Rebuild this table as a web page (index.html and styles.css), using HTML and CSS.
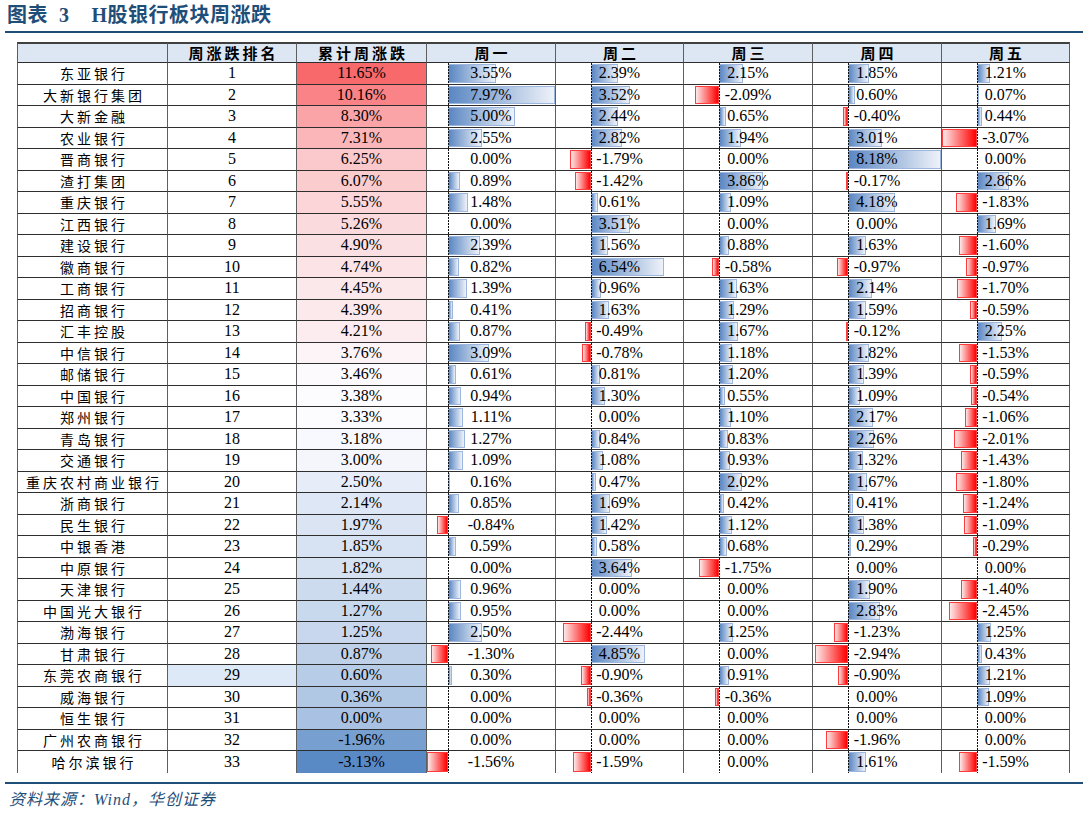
FILE: index.html
```html
<!DOCTYPE html>
<html lang="zh-CN">
<head>
<meta charset="utf-8">
<title>H股银行板块周涨跌</title>
<link rel="stylesheet" href="styles.css">
</head>
<body>
<div class="page">
  <h1 class="title"><span>图表</span><span class="no">3</span><span class="name">H股银行板块周涨跌</span></h1>
  <table class="tbl">
    <thead>
      <tr><th></th><th>周涨跌排名</th><th>累计周涨跌</th><th>周一</th><th>周二</th><th>周三</th><th>周四</th><th>周五</th></tr>
    </thead>
    <tbody>
      <tr><td class="nm">东亚银行</td><td>1</td><td style="background:#f8696b">11.65%</td><td class="w w1"><i class="p" style="--v:3.55"></i><span>3.55%</span></td><td class="w"><i class="p" style="--v:2.39"></i><span>2.39%</span></td><td class="w"><i class="p" style="--v:2.15"></i><span>2.15%</span></td><td class="w"><i class="p" style="--v:1.85"></i><span>1.85%</span></td><td class="w"><i class="p" style="--v:1.21"></i><span>1.21%</span></td></tr>
      <tr><td class="nm">大新银行集团</td><td>2</td><td style="background:#f98386">10.16%</td><td class="w w1"><i class="p" style="--v:7.97"></i><span>7.97%</span></td><td class="w"><i class="p" style="--v:3.52"></i><span>3.52%</span></td><td class="w"><i class="n" style="--v:2.09"></i><span>-2.09%</span></td><td class="w"><i class="p" style="--v:0.60"></i><span>0.60%</span></td><td class="w"><i class="p" style="--v:0.07"></i><span>0.07%</span></td></tr>
      <tr><td class="nm">大新金融</td><td>3</td><td style="background:#faa4a7">8.30%</td><td class="w w1"><i class="p" style="--v:5.00"></i><span>5.00%</span></td><td class="w"><i class="p" style="--v:2.44"></i><span>2.44%</span></td><td class="w"><i class="p" style="--v:0.65"></i><span>0.65%</span></td><td class="w"><i class="n" style="--v:0.40"></i><span>-0.40%</span></td><td class="w"><i class="p" style="--v:0.44"></i><span>0.44%</span></td></tr>
      <tr><td class="nm">农业银行</td><td>4</td><td style="background:#fab6b8">7.31%</td><td class="w w1"><i class="p" style="--v:2.55"></i><span>2.55%</span></td><td class="w"><i class="p" style="--v:2.82"></i><span>2.82%</span></td><td class="w"><i class="p" style="--v:1.94"></i><span>1.94%</span></td><td class="w"><i class="p" style="--v:3.01"></i><span>3.01%</span></td><td class="w"><i class="n" style="--v:3.07"></i><span>-3.07%</span></td></tr>
      <tr><td class="nm">晋商银行</td><td>5</td><td style="background:#fbc8cb">6.25%</td><td class="w w1"><span>0.00%</span></td><td class="w"><i class="n" style="--v:1.79"></i><span>-1.79%</span></td><td class="w"><span>0.00%</span></td><td class="w"><i class="p" style="--v:8.18"></i><span>8.18%</span></td><td class="w"><span>0.00%</span></td></tr>
      <tr><td class="nm">渣打集团</td><td>6</td><td style="background:#fbccce">6.07%</td><td class="w w1"><i class="p" style="--v:0.89"></i><span>0.89%</span></td><td class="w"><i class="n" style="--v:1.42"></i><span>-1.42%</span></td><td class="w"><i class="p" style="--v:3.86"></i><span>3.86%</span></td><td class="w"><i class="n" style="--v:0.17"></i><span>-0.17%</span></td><td class="w"><i class="p" style="--v:2.86"></i><span>2.86%</span></td></tr>
      <tr><td class="nm">重庆银行</td><td>7</td><td style="background:#fbd5d7">5.55%</td><td class="w w1"><i class="p" style="--v:1.48"></i><span>1.48%</span></td><td class="w"><i class="p" style="--v:0.61"></i><span>0.61%</span></td><td class="w"><i class="p" style="--v:1.09"></i><span>1.09%</span></td><td class="w"><i class="p" style="--v:4.18"></i><span>4.18%</span></td><td class="w"><i class="n" style="--v:1.83"></i><span>-1.83%</span></td></tr>
      <tr><td class="nm">江西银行</td><td>8</td><td style="background:#fbdadd">5.26%</td><td class="w w1"><span>0.00%</span></td><td class="w"><i class="p" style="--v:3.51"></i><span>3.51%</span></td><td class="w"><span>0.00%</span></td><td class="w"><span>0.00%</span></td><td class="w"><i class="p" style="--v:1.69"></i><span>1.69%</span></td></tr>
      <tr><td class="nm">建设银行</td><td>9</td><td style="background:#fbe0e3">4.90%</td><td class="w w1"><i class="p" style="--v:2.39"></i><span>2.39%</span></td><td class="w"><i class="p" style="--v:1.56"></i><span>1.56%</span></td><td class="w"><i class="p" style="--v:0.88"></i><span>0.88%</span></td><td class="w"><i class="p" style="--v:1.63"></i><span>1.63%</span></td><td class="w"><i class="n" style="--v:1.60"></i><span>-1.60%</span></td></tr>
      <tr><td class="nm">徽商银行</td><td>10</td><td style="background:#fbe3e6">4.74%</td><td class="w w1"><i class="p" style="--v:0.82"></i><span>0.82%</span></td><td class="w"><i class="p" style="--v:6.54"></i><span>6.54%</span></td><td class="w"><i class="n" style="--v:0.58"></i><span>-0.58%</span></td><td class="w"><i class="n" style="--v:0.97"></i><span>-0.97%</span></td><td class="w"><i class="n" style="--v:0.97"></i><span>-0.97%</span></td></tr>
      <tr><td class="nm">工商银行</td><td>11</td><td style="background:#fbe8eb">4.45%</td><td class="w w1"><i class="p" style="--v:1.39"></i><span>1.39%</span></td><td class="w"><i class="p" style="--v:0.96"></i><span>0.96%</span></td><td class="w"><i class="p" style="--v:1.63"></i><span>1.63%</span></td><td class="w"><i class="p" style="--v:2.14"></i><span>2.14%</span></td><td class="w"><i class="n" style="--v:1.70"></i><span>-1.70%</span></td></tr>
      <tr><td class="nm">招商银行</td><td>12</td><td style="background:#fbe9ec">4.39%</td><td class="w w1"><i class="p" style="--v:0.41"></i><span>0.41%</span></td><td class="w"><i class="p" style="--v:1.63"></i><span>1.63%</span></td><td class="w"><i class="p" style="--v:1.29"></i><span>1.29%</span></td><td class="w"><i class="p" style="--v:1.59"></i><span>1.59%</span></td><td class="w"><i class="n" style="--v:0.59"></i><span>-0.59%</span></td></tr>
      <tr><td class="nm">汇丰控股</td><td>13</td><td style="background:#fcecef">4.21%</td><td class="w w1"><i class="p" style="--v:0.87"></i><span>0.87%</span></td><td class="w"><i class="n" style="--v:0.49"></i><span>-0.49%</span></td><td class="w"><i class="p" style="--v:1.67"></i><span>1.67%</span></td><td class="w"><i class="n" style="--v:0.12"></i><span>-0.12%</span></td><td class="w"><i class="p" style="--v:2.25"></i><span>2.25%</span></td></tr>
      <tr><td class="nm">中信银行</td><td>14</td><td style="background:#fcf4f7">3.76%</td><td class="w w1"><i class="p" style="--v:3.09"></i><span>3.09%</span></td><td class="w"><i class="n" style="--v:0.78"></i><span>-0.78%</span></td><td class="w"><i class="p" style="--v:1.18"></i><span>1.18%</span></td><td class="w"><i class="p" style="--v:1.82"></i><span>1.82%</span></td><td class="w"><i class="n" style="--v:1.53"></i><span>-1.53%</span></td></tr>
      <tr><td class="nm">邮储银行</td><td>15</td><td style="background:#fcfafd">3.46%</td><td class="w w1"><i class="p" style="--v:0.61"></i><span>0.61%</span></td><td class="w"><i class="p" style="--v:0.81"></i><span>0.81%</span></td><td class="w"><i class="p" style="--v:1.20"></i><span>1.20%</span></td><td class="w"><i class="p" style="--v:1.39"></i><span>1.39%</span></td><td class="w"><i class="n" style="--v:0.59"></i><span>-0.59%</span></td></tr>
      <tr><td class="nm">中国银行</td><td>16</td><td style="background:#fcfbfe">3.38%</td><td class="w w1"><i class="p" style="--v:0.94"></i><span>0.94%</span></td><td class="w"><i class="p" style="--v:1.30"></i><span>1.30%</span></td><td class="w"><i class="p" style="--v:0.55"></i><span>0.55%</span></td><td class="w"><i class="p" style="--v:1.09"></i><span>1.09%</span></td><td class="w"><i class="n" style="--v:0.54"></i><span>-0.54%</span></td></tr>
      <tr><td class="nm">郑州银行</td><td>17</td><td style="background:#fcfcff">3.33%</td><td class="w w1"><i class="p" style="--v:1.11"></i><span>1.11%</span></td><td class="w"><span>0.00%</span></td><td class="w"><i class="p" style="--v:1.10"></i><span>1.10%</span></td><td class="w"><i class="p" style="--v:2.17"></i><span>2.17%</span></td><td class="w"><i class="n" style="--v:1.06"></i><span>-1.06%</span></td></tr>
      <tr><td class="nm">青岛银行</td><td>18</td><td style="background:#f8f9fe">3.18%</td><td class="w w1"><i class="p" style="--v:1.27"></i><span>1.27%</span></td><td class="w"><i class="p" style="--v:0.84"></i><span>0.84%</span></td><td class="w"><i class="p" style="--v:0.83"></i><span>0.83%</span></td><td class="w"><i class="p" style="--v:2.26"></i><span>2.26%</span></td><td class="w"><i class="n" style="--v:2.01"></i><span>-2.01%</span></td></tr>
      <tr><td class="nm">交通银行</td><td>19</td><td style="background:#f4f6fc">3.00%</td><td class="w w1"><i class="p" style="--v:1.09"></i><span>1.09%</span></td><td class="w"><i class="p" style="--v:1.08"></i><span>1.08%</span></td><td class="w"><i class="p" style="--v:0.93"></i><span>0.93%</span></td><td class="w"><i class="p" style="--v:1.32"></i><span>1.32%</span></td><td class="w"><i class="n" style="--v:1.43"></i><span>-1.43%</span></td></tr>
      <tr><td class="nm">重庆农村商业银行</td><td>20</td><td style="background:#e7edf8">2.50%</td><td class="w w1"><i class="p" style="--v:0.16"></i><span>0.16%</span></td><td class="w"><i class="p" style="--v:0.47"></i><span>0.47%</span></td><td class="w"><i class="p" style="--v:2.02"></i><span>2.02%</span></td><td class="w"><i class="p" style="--v:1.67"></i><span>1.67%</span></td><td class="w"><i class="n" style="--v:1.80"></i><span>-1.80%</span></td></tr>
      <tr><td class="nm">浙商银行</td><td>21</td><td style="background:#dee7f5">2.14%</td><td class="w w1"><i class="p" style="--v:0.85"></i><span>0.85%</span></td><td class="w"><i class="p" style="--v:1.69"></i><span>1.69%</span></td><td class="w"><i class="p" style="--v:0.42"></i><span>0.42%</span></td><td class="w"><i class="p" style="--v:0.41"></i><span>0.41%</span></td><td class="w"><i class="n" style="--v:1.24"></i><span>-1.24%</span></td></tr>
      <tr><td class="nm">民生银行</td><td>22</td><td style="background:#dae4f3">1.97%</td><td class="w w1"><i class="n" style="--v:0.84"></i><span>-0.84%</span></td><td class="w"><i class="p" style="--v:1.42"></i><span>1.42%</span></td><td class="w"><i class="p" style="--v:1.12"></i><span>1.12%</span></td><td class="w"><i class="p" style="--v:1.38"></i><span>1.38%</span></td><td class="w"><i class="n" style="--v:1.09"></i><span>-1.09%</span></td></tr>
      <tr><td class="nm">中银香港</td><td>23</td><td style="background:#d7e2f2">1.85%</td><td class="w w1"><i class="p" style="--v:0.59"></i><span>0.59%</span></td><td class="w"><i class="p" style="--v:0.58"></i><span>0.58%</span></td><td class="w"><i class="p" style="--v:0.68"></i><span>0.68%</span></td><td class="w"><i class="p" style="--v:0.29"></i><span>0.29%</span></td><td class="w"><i class="n" style="--v:0.29"></i><span>-0.29%</span></td></tr>
      <tr><td class="nm">中原银行</td><td>24</td><td style="background:#d6e1f2">1.82%</td><td class="w w1"><span>0.00%</span></td><td class="w"><i class="p" style="--v:3.64"></i><span>3.64%</span></td><td class="w"><i class="n" style="--v:1.75"></i><span>-1.75%</span></td><td class="w"><span>0.00%</span></td><td class="w"><span>0.00%</span></td></tr>
      <tr><td class="nm">天津银行</td><td>25</td><td style="background:#cddbee">1.44%</td><td class="w w1"><i class="p" style="--v:0.96"></i><span>0.96%</span></td><td class="w"><span>0.00%</span></td><td class="w"><span>0.00%</span></td><td class="w"><i class="p" style="--v:1.90"></i><span>1.90%</span></td><td class="w"><i class="n" style="--v:1.40"></i><span>-1.40%</span></td></tr>
      <tr><td class="nm">中国光大银行</td><td>26</td><td style="background:#c8d8ed">1.27%</td><td class="w w1"><i class="p" style="--v:0.95"></i><span>0.95%</span></td><td class="w"><span>0.00%</span></td><td class="w"><span>0.00%</span></td><td class="w"><i class="p" style="--v:2.83"></i><span>2.83%</span></td><td class="w"><i class="n" style="--v:2.45"></i><span>-2.45%</span></td></tr>
      <tr><td class="nm">渤海银行</td><td>27</td><td style="background:#c8d7ed">1.25%</td><td class="w w1"><i class="p" style="--v:2.50"></i><span>2.50%</span></td><td class="w"><i class="n" style="--v:2.44"></i><span>-2.44%</span></td><td class="w"><i class="p" style="--v:1.25"></i><span>1.25%</span></td><td class="w"><i class="n" style="--v:1.23"></i><span>-1.23%</span></td><td class="w"><i class="p" style="--v:1.25"></i><span>1.25%</span></td></tr>
      <tr><td class="nm">甘肃银行</td><td>28</td><td style="background:#bed1e9">0.87%</td><td class="w w1"><i class="n" style="--v:1.30"></i><span>-1.30%</span></td><td class="w"><i class="p" style="--v:4.85"></i><span>4.85%</span></td><td class="w"><span>0.00%</span></td><td class="w"><i class="n" style="--v:2.94"></i><span>-2.94%</span></td><td class="w"><i class="p" style="--v:0.43"></i><span>0.43%</span></td></tr>
      <tr><td class="nm">东莞农商银行</td><td class="hl">29</td><td style="background:#b7cce7">0.60%</td><td class="w w1"><i class="p" style="--v:0.30"></i><span>0.30%</span></td><td class="w"><i class="n" style="--v:0.90"></i><span>-0.90%</span></td><td class="w"><i class="p" style="--v:0.91"></i><span>0.91%</span></td><td class="w"><i class="n" style="--v:0.90"></i><span>-0.90%</span></td><td class="w"><i class="p" style="--v:1.21"></i><span>1.21%</span></td></tr>
      <tr><td class="nm">威海银行</td><td>30</td><td style="background:#b1c8e5">0.36%</td><td class="w w1"><span>0.00%</span></td><td class="w"><i class="n" style="--v:0.36"></i><span>-0.36%</span></td><td class="w"><i class="n" style="--v:0.36"></i><span>-0.36%</span></td><td class="w"><span>0.00%</span></td><td class="w"><i class="p" style="--v:1.09"></i><span>1.09%</span></td></tr>
      <tr><td class="nm">恒生银行</td><td>31</td><td style="background:#a9c1e2">0.00%</td><td class="w w1"><span>0.00%</span></td><td class="w"><span>0.00%</span></td><td class="w"><span>0.00%</span></td><td class="w"><span>0.00%</span></td><td class="w"><span>0.00%</span></td></tr>
      <tr><td class="nm">广州农商银行</td><td>32</td><td style="background:#779fd0">-1.96%</td><td class="w w1"><span>0.00%</span></td><td class="w"><span>0.00%</span></td><td class="w"><span>0.00%</span></td><td class="w"><i class="n" style="--v:1.96"></i><span>-1.96%</span></td><td class="w"><span>0.00%</span></td></tr>
      <tr><td class="nm">哈尔滨银行</td><td>33</td><td style="background:#5a8ac6">-3.13%</td><td class="w w1"><i class="n" style="--v:1.56"></i><span>-1.56%</span></td><td class="w"><i class="n" style="--v:1.59"></i><span>-1.59%</span></td><td class="w"><span>0.00%</span></td><td class="w"><i class="p" style="--v:1.61"></i><span>1.61%</span></td><td class="w"><i class="n" style="--v:1.59"></i><span>-1.59%</span></td></tr>
    </tbody>
  </table>
  <div class="rule"></div>
  <p class="src">资料来源：Wind，华创证券</p>
</div>
</body>
</html>
```

FILE: styles.css
```css
* { box-sizing: border-box; }

body {
  margin: 0;
  background: #fff;
  color: #000;
  font-family: "Liberation Serif", "Noto Sans CJK SC", serif;
}

.page {
  width: 1089px;
  padding: 0 6px 0 5px;
}

.title {
  margin: 0;
  height: 33px;
  padding: 0 0 0 2px;
  font-size: 20px;
  font-weight: bold;
  line-height: 31px;
  color: #1f4e79;
  border-bottom: 2px solid #1f4e79;
  letter-spacing: 0.5px;
}
.title .no { margin-left: 11px; }
.title .name { margin-left: 22px; }

/* table laid out as a grid for exact column widths and row heights */
.tbl {
  display: grid;
  grid-template-columns: 151px 129px 130px 129px 128px 129px 129px 128px;
  grid-template-rows: 21px;
  grid-auto-rows: 21.5px;
  width: 1053px;
  margin: 9px 0 0 12px;
  font-size: 16px;
}
.tbl thead,
.tbl tbody,
.tbl tr { display: contents; }

.tbl th,
.tbl td {
  display: flex;
  align-items: center;
  justify-content: center;
  padding: 0;
  line-height: 20px;
  white-space: nowrap;
  border-right: 1px solid #5e5e5e;
}
.tbl th:first-child,
.tbl td:first-child { border-left: 1px solid #5e5e5e; }

.tbl th {
  background: #dce7f3;
  border-top: 2px solid #404040;
  border-bottom: 1px solid #2e2e2e;
  font-family: "Noto Sans CJK SC", sans-serif;
  font-size: 15px;
  font-weight: bold;
  letter-spacing: 3px;
  padding-left: 3px;
}

.tbl td { border-bottom: 1px solid #2e2e2e; }
.tbl tbody tr:last-child td { border-bottom: none; }

.tbl td.nm {
  font-family: "Noto Sans CJK SC", sans-serif;
  font-size: 14px;
  letter-spacing: 3px;
  padding-left: 3px;
}

.tbl td.hl { background: #dde9f6; }

/* data bars */
.w {
  position: relative;
  --ax: 27.29%;
  --r: 11.25;
}
.w1 {
  --ax: 16.37%;
  --r: 9.53;
}
.w::after {
  content: "";
  position: absolute;
  left: var(--ax);
  top: 0;
  bottom: 0;
  width: 1px;
  background: repeating-linear-gradient(to bottom, #111 0 2px, transparent 2px 3px);
}
.w span {
  position: relative;
  z-index: 1;
}
.p,
.n {
  position: absolute;
  top: 1px;
  bottom: 1px;
  width: calc(var(--v) / var(--r) * 100%);
}
.p {
  left: var(--ax);
  background: linear-gradient(to right, #5b87c3, #eef2f9);
  border: 1px solid #9db6dd;
}
.n {
  right: calc(100% - var(--ax));
  background: linear-gradient(to right, #fde8e8, #ff0000);
  border: 1px solid #ff3b3b;
}

.rule {
  margin-top: 9px;
  border-top: 2px solid #1f4e79;
}

.src {
  margin: 0;
  padding: 6px 0 0 4px;
  font-size: 16px;
  line-height: 20px;
  font-style: italic;
  letter-spacing: 1px;
  color: #1f4e79;
}
```
